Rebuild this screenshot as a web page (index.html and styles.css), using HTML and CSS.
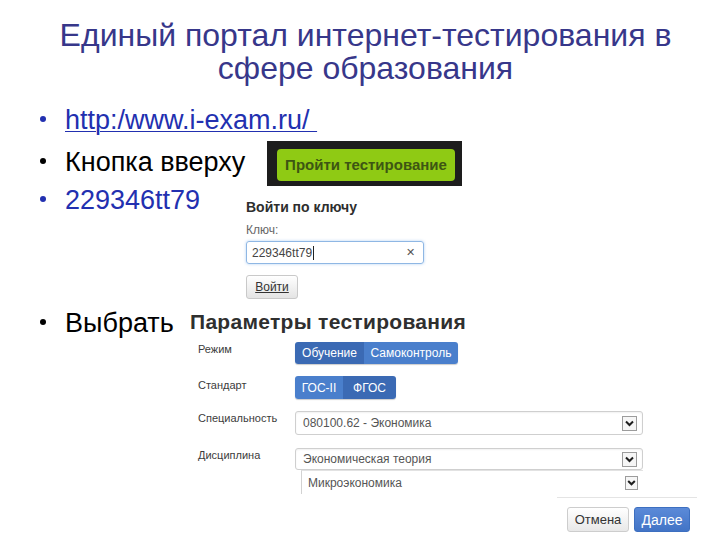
FILE: index.html
```html
<!DOCTYPE html>
<html lang="ru">
<head>
<meta charset="utf-8">
<title>Единый портал интернет-тестирования</title>
<link rel="stylesheet" href="styles.css">
</head>
<body>
<h1 class="title">Единый портал интернет-тестирования в<br>сфере образования</h1>
<ul class="points">
  <li class="point row-link"><span class="dot"></span><a class="url" href="#">http:/www.i-exam.ru/&nbsp;</a></li>
  <li class="point row-btn"><span class="dot"></span><span class="lbl lbl-btn">Кнопка вверху</span><span class="green-frame"><span class="green-btn">Пройти тестирование</span></span></li>
  <li class="point row-key"><span class="dot"></span><span class="lbl lbl-key">229346tt79</span>
    <div class="login">
      <div class="login-title">Войти по ключу</div>
      <div class="login-label">Ключ:</div>
      <div class="key-input"><span class="key-value">229346tt79</span><span class="caret"></span><span class="clear">&#x2715;</span></div>
      <div class="login-btn"><span class="login-btn-text">Войти</span></div>
    </div>
  </li>
  <li class="point row-choose"><span class="dot"></span><span class="lbl lbl-choose">Выбрать</span>
    <div class="params">
      <div class="params-title">Параметры тестирования</div>
      <div class="form">
        <div class="frow frow-mode">
          <div class="flabel">Режим</div>
          <div class="seg"><span class="segb dark w-obuch">Обучение</span><span class="segb light w-samo">Самоконтроль</span></div>
        </div>
        <div class="frow frow-std">
          <div class="flabel">Стандарт</div>
          <div class="seg"><span class="segb light w-gos">ГОС-II</span><span class="segb dark w-fgos">ФГОС</span></div>
        </div>
        <div class="frow frow-spec">
          <div class="flabel">Специальность</div>
          <div class="select"><span class="sel-text">080100.62 - Экономика</span>
            <svg class="arrow" width="15" height="15" viewBox="0 0 15 15"><rect x="0.5" y="0.5" width="14" height="14" fill="#f6f6f6" stroke="#9c9c9c"/><path d="M4 5.5 L7.5 9 L11 5.5" fill="none" stroke="#1e1e1e" stroke-width="2"/></svg>
          </div>
        </div>
        <div class="frow frow-disc">
          <div class="flabel">Дисциплина</div>
          <div class="ctrl-col">
            <div class="select select-disc"><span class="sel-text">Экономическая теория</span>
              <svg class="arrow" width="15" height="15" viewBox="0 0 15 15"><rect x="0.5" y="0.5" width="14" height="14" fill="#f6f6f6" stroke="#9c9c9c"/><path d="M4 5.5 L7.5 9 L11 5.5" fill="none" stroke="#1e1e1e" stroke-width="2"/></svg>
            </div>
            <div class="subselect"><span class="sel-text">Микроэкономика</span>
              <svg class="arrow" width="13" height="14" viewBox="0 0 13 14"><rect x="0.5" y="0.5" width="12" height="13" fill="#f6f6f6" stroke="#9c9c9c"/><path d="M3.2 5 L6.5 8.3 L9.8 5" fill="none" stroke="#1e1e1e" stroke-width="2"/></svg>
            </div>
          </div>
        </div>
      </div>
      <div class="footer">
        <span class="fbtn cancel">Отмена</span><span class="fbtn next">Далее</span>
      </div>
    </div>
  </li>
</ul>
</body>
</html>
```
FILE: styles.css
```css
html, body {
  margin: 0;
  padding: 0;
  background: #ffffff;
}
body {
  width: 720px;
  height: 540px;
  overflow: hidden;
  font-family: "Liberation Sans", Arial, sans-serif;
}
.title {
  margin: 0;
  padding: 19px 0 0 11px;
  font-weight: normal;
  font-size: 32px;
  line-height: 33px;
  text-align: center;
  color: #37378a;
}
.points {
  list-style: none;
  margin: 15px 0 0 40px;
  padding: 0;
}
.point {
  display: flex;
  align-items: flex-start;
  font-size: 27px;
  line-height: 40px;
  color: #000;
}
.dot {
  flex: none;
  width: 6px;
  height: 6px;
  border-radius: 50%;
  background: currentColor;
  margin-top: 16px;
  margin-right: 19px;
}
.row-link {
  height: 42px;
  color: #2230b0;
}
.url {
  color: #2230b0;
  text-decoration: underline;
  text-underline-offset: 2px;
  text-decoration-thickness: 1px;
}
.row-btn {
  height: 38px;
}
.lbl {
  flex: none;
  white-space: nowrap;
}
.lbl-btn { width: 202px; }
.lbl-key { width: 181px; }
.lbl-choose { width: 125px; }
.row-key { color: #2230b0; }

.green-frame {
  flex: none;
  margin-top: -1px;
  width: 195px;
  height: 45px;
  box-sizing: border-box;
  padding: 8px 7px 5px 10px;
  background: #1d1d1d;
}
.green-btn {
  display: block;
  height: 32px;
  border-radius: 4px;
  background: #8fca14;
  color: #3d5613;
  font-size: 15px;
  font-weight: bold;
  line-height: 32px;
  text-align: center;
  white-space: nowrap;
}

/* login block */
.login {
  margin-top: 19px;
  margin-bottom: 4px;
  color: #333;
  line-height: normal;
}
.login-title {
  font-size: 14px;
  font-weight: bold;
  line-height: 17px;
  color: #2e2e2e;
}
.login-label {
  margin-top: 7px;
  font-size: 12px;
  line-height: 15px;
  color: #666;
}
.key-input {
  margin-top: 3px;
  width: 178px;
  height: 23px;
  box-sizing: border-box;
  border: 1px solid #8fb7e4;
  border-radius: 3px;
  box-shadow: 0 0 3px rgba(82, 150, 230, 0.45);
  display: flex;
  align-items: center;
  padding: 0 8px 0 5px;
  font-size: 12px;
  color: #444;
}
.caret {
  width: 1px;
  height: 14px;
  background: #222;
  margin-left: 1px;
}
.clear {
  margin-left: auto;
  font-size: 11px;
  color: #555;
}
.login-btn {
  margin-top: 11px;
  width: 52px;
  height: 24px;
  box-sizing: border-box;
  border: 1px solid #c9c9c9;
  border-radius: 3px;
  background: linear-gradient(#ffffff, #e4e4e4);
  display: flex;
  align-items: center;
  justify-content: center;
  font-size: 12px;
  color: #333;
}
.login-btn-text {
  text-decoration: underline;
}

/* params panel */
.params {
  flex: 1;
  margin-top: 6px;
  line-height: normal;
  color: #333;
  padding-right: 23px;
}
.params-title {
  font-size: 21px;
  font-weight: bold;
  line-height: 25px;
  color: #2f2f2f;
  letter-spacing: 0.3px;
}
.form {
  margin-top: 8px;
  padding-left: 8px;
}
.frow {
  display: grid;
  grid-template-columns: 97px 348px;
  align-items: start;
}
.frow-mode { height: 22px; margin-bottom: 12px; }
.frow-std { height: 23px; margin-bottom: 12px; }
.frow-spec { height: 24px; margin-bottom: 13px; }
.flabel {
  font-size: 11px;
  line-height: 13px;
  padding-top: 1px;
  color: #3c3c3c;
}
.frow-std .flabel { padding-top: 3px; }
.seg {
  display: inline-flex;
  justify-self: start;
  height: 100%;
  border-radius: 3px;
  overflow: hidden;
  box-shadow: 0 1px 1px rgba(0, 0, 0, 0.2);
}
.segb {
  display: flex;
  align-items: center;
  justify-content: center;
  box-sizing: border-box;
  white-space: nowrap;
  font-size: 12px;
  color: #fff;
}
.segb.dark { background: #3b6ab4; }
.segb.light { background: #4a7fcc; }
.w-obuch { width: 69px; }
.w-samo { width: 94px; }
.w-gos { width: 48px; }
.w-fgos { width: 53px; }

.select {
  height: 24px;
  box-sizing: border-box;
  border: 1px solid #cfcfcf;
  border-radius: 3px;
  box-shadow: inset 0 1px 2px rgba(0, 0, 0, 0.06);
  display: flex;
  align-items: center;
  padding: 0 5px 0 7px;
  font-size: 12px;
  color: #555;
}
.select-disc { height: 22px; }
.sel-text { flex: 1; }
.arrow { flex: none; display: block; }
.subselect {
  margin-left: 6px;
  height: 24px;
  box-sizing: border-box;
  border-left: 1px solid #d2d2d2;
  border-top: 1px solid #e2e2e2;
  display: flex;
  align-items: center;
  padding: 0 5px 0 6px;
  font-size: 12px;
  color: #555;
}
.footer {
  margin: 3px 0 0 auto;
  width: 140px;
  box-sizing: border-box;
  border-top: 1px solid #e4e4e4;
  padding: 9px 7px 0 0;
  display: flex;
  justify-content: flex-end;
  gap: 5px;
}
.fbtn {
  height: 25px;
  box-sizing: border-box;
  border-radius: 3px;
  display: flex;
  align-items: center;
  justify-content: center;
}
.cancel {
  width: 62px;
  border: 1px solid #cdcdcd;
  background: linear-gradient(#ffffff, #e8e8e8);
  font-size: 13px;
  color: #333;
}
.next {
  width: 56px;
  border: 1px solid #3d6fc0;
  background: linear-gradient(#5b8ad8, #4274c6);
  font-size: 14px;
  color: #fff;
}
```
